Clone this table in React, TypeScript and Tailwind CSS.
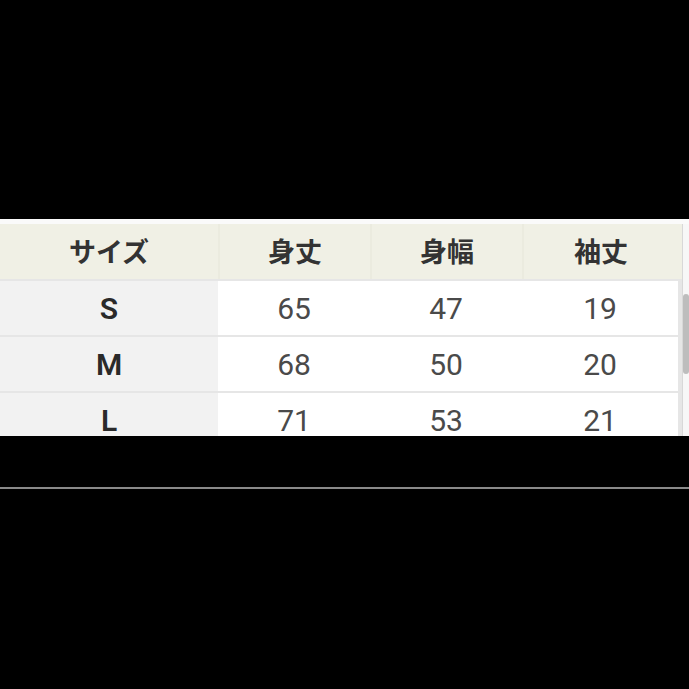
import React from "react";

const rows = [
  ["S", "65", "47", "19"],
  ["M", "68", "50", "20"],
  ["L", "71", "53", "21"],
];

const cols = ["w-[218px]", "w-[152px]", "w-[152px]", "w-[156px]"];

export default function App() {
  return (
    <div className="w-[689px] h-[689px] bg-black overflow-hidden flex flex-col" style={{ fontFamily: "Roboto, 'Noto Sans CJK JP', sans-serif" }}>
      <div className="h-[219px] shrink-0" />
      <div className="h-[217px] shrink-0 bg-[#fafafa] pt-[5px] overflow-hidden flex">
        <div className="w-[682px] flex flex-col gap-[2px] bg-[#e6e6e6]">
          <div className="h-[55px] shrink-0 flex bg-[#f0f0e5]">
            {["サイズ", "身丈", "身幅", "袖丈"].map((h, i) => (
              <div key={h} className={`${cols[i]} flex items-center justify-center text-[27px] font-bold text-[#333] ${i > 0 ? "border-l-2 border-[#ebebdf]" : ""}`} style={{ fontFamily: "'Noto Sans CJK JP', sans-serif" }}>
                {h}
              </div>
            ))}
          </div>
          {rows.map((r) => (
            <div key={r[0]} className="h-[54px] shrink-0 flex gap-[2px]">
              {r.map((c, i) => (
                <div
                  key={i}
                  className={`${cols[i]} ${i === 0 ? "bg-[#f2f2f2] font-semibold text-[#2a2a2a]" : "bg-white text-[#4a4a4a]"} ${i === 0 ? "" : "-ml-[2px] first:ml-0"} flex items-center justify-center text-[30px] leading-none pt-[1px]`}
                >
                  {c}
                </div>
              ))}
            </div>
          ))}
        </div>
        <div className="w-[7px] flex flex-col bg-[#f7f7f7] border-l border-[#d8d8d8]">
          <div className="h-[70px] shrink-0" />
          <div className="h-[80px] shrink-0 bg-[#bdbdbd] rounded-sm" />
        </div>
      </div>
      <div className="h-[51px] shrink-0" />
      <div className="h-[2px] shrink-0 bg-[#8a8a8a]" />
    </div>
  );
}
